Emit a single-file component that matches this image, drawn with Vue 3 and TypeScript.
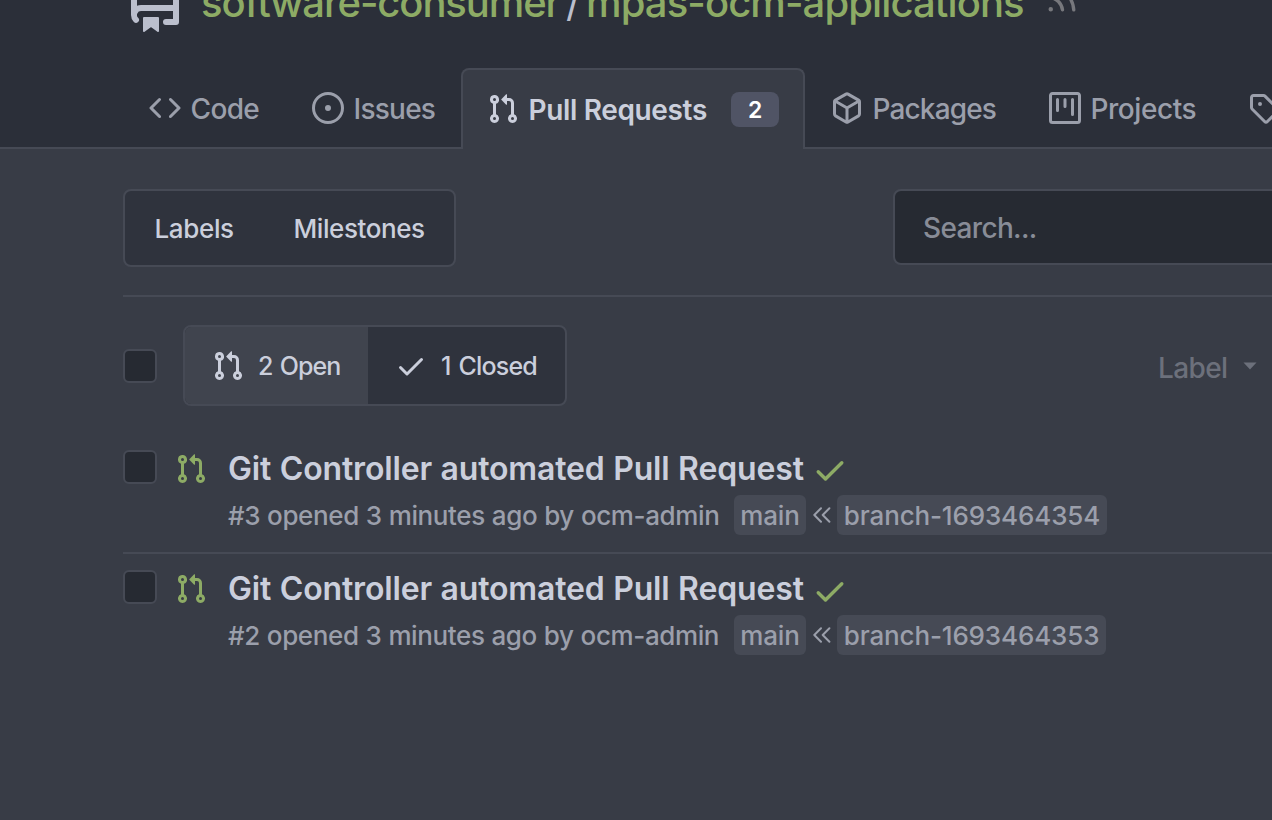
<script setup lang="ts">
interface Tab {
  key: string
  label: string
  icon: string
  badge?: number
}

interface PullRequest {
  id: number
  title: string
  meta: string
  target: string
  source: string
}

const icons: Record<string, string> = {
  repo: 'M2 2.5A2.5 2.5 0 0 1 4.5 0h8.75a.75.75 0 0 1 .75.75v12.5a.75.75 0 0 1-.75.75h-2.5a.75.75 0 0 1 0-1.5h1.75v-2h-8a1 1 0 0 0-.714 1.7.75.75 0 1 1-1.072 1.05A2.495 2.495 0 0 1 2 11.5Zm10.5-1h-8a1 1 0 0 0-1 1v6.708A2.486 2.486 0 0 1 4.5 9h8ZM5 12.25a.25.25 0 0 1 .25-.25h3.5a.25.25 0 0 1 .25.25v3.25a.25.25 0 0 1-.4.2l-1.45-1.087a.249.249 0 0 0-.3 0L5.4 15.7a.25.25 0 0 1-.4-.2Z',
  rss: 'M2.002 2.725a.75.75 0 0 1 .797-.699C8.79 2.42 13.58 7.21 13.974 13.201a.75.75 0 0 1-1.497.098 10.502 10.502 0 0 0-9.776-9.776.747.747 0 0 1-.7-.798ZM2.84 7.05h-.002a7.002 7.002 0 0 1 6.113 6.111.75.75 0 0 1-1.49.178 5.503 5.503 0 0 0-4.8-4.8.75.75 0 0 1 .179-1.489ZM2 13a1 1 0 1 1 2 0 1 1 0 0 1-2 0Z',
  code: 'm11.28 3.22 4.25 4.25a.75.75 0 0 1 0 1.06l-4.25 4.25a.749.749 0 0 1-1.275-.326.749.749 0 0 1 .215-.734L13.94 8l-3.72-3.72a.749.749 0 0 1 .326-1.275.749.749 0 0 1 .734.215Zm-6.56 0a.751.751 0 0 1 1.042.018.751.751 0 0 1 .018 1.042L2.06 8l3.72 3.72a.749.749 0 0 1-.326 1.275.749.749 0 0 1-.734-.215L.47 8.53a.75.75 0 0 1 0-1.06Z',
  issues: 'M8 9.5a1.5 1.5 0 1 0 0-3 1.5 1.5 0 0 0 0 3ZM8 0a8 8 0 1 1 0 16A8 8 0 0 1 8 0ZM1.5 8a6.5 6.5 0 1 0 13 0 6.5 6.5 0 0 0-13 0Z',
  pulls: 'M1.5 3.25a2.25 2.25 0 1 1 3 2.122v5.256a2.251 2.251 0 1 1-1.5 0V5.372A2.25 2.25 0 0 1 1.5 3.25Zm5.677-.177L9.573.677A.25.25 0 0 1 10 .854V2.5h1A2.5 2.5 0 0 1 13.5 5v5.628a2.251 2.251 0 1 1-1.5 0V5a1 1 0 0 0-1-1h-1v1.646a.25.25 0 0 1-.427.177L7.177 3.427a.25.25 0 0 1 0-.354ZM3.75 2.5a.75.75 0 1 0 0 1.5.75.75 0 0 0 0-1.5Zm0 9.5a.75.75 0 1 0 0 1.5.75.75 0 0 0 0-1.5Zm8.25.75a.75.75 0 1 0 1.5 0 .75.75 0 0 0-1.5 0Z',
  packages: 'm8.878.392 5.25 3.045c.54.314.872.89.872 1.514v6.098a1.75 1.75 0 0 1-.872 1.514l-5.25 3.045a1.75 1.75 0 0 1-1.756 0l-5.25-3.045A1.75 1.75 0 0 1 1 11.049V4.951c0-.624.332-1.201.872-1.514L7.122.392a1.75 1.75 0 0 1 1.756 0ZM7.875 1.69l-4.63 2.685L8 7.133l4.755-2.758-4.63-2.685a.248.248 0 0 0-.25 0ZM2.5 5.677v5.372c0 .09.047.171.125.216l4.625 2.683V8.432Zm6.25 8.271 4.625-2.683a.25.25 0 0 0 .125-.216V5.677L8.75 8.432Z',
  projects: 'M1.75 0h12.5C15.216 0 16 .784 16 1.75v12.5A1.75 1.75 0 0 1 14.25 16H1.75A1.75 1.75 0 0 1 0 14.25V1.75C0 .784.784 0 1.75 0ZM1.5 1.75v12.5c0 .138.112.25.25.25h12.5a.25.25 0 0 0 .25-.25V1.75a.25.25 0 0 0-.25-.25H1.75a.25.25 0 0 0-.25.25ZM11.75 3a.75.75 0 0 1 .75.75v7.5a.75.75 0 0 1-1.5 0v-7.5a.75.75 0 0 1 .75-.75Zm-8.25.75a.75.75 0 0 1 1.5 0v5.5a.75.75 0 0 1-1.5 0ZM8 3a.75.75 0 0 1 .75.75v3.5a.75.75 0 0 1-1.5 0v-3.5A.75.75 0 0 1 8 3Z',
  releases: 'M1 7.775V2.75C1 1.784 1.784 1 2.75 1h5.025c.464 0 .91.184 1.238.513l6.25 6.25a1.75 1.75 0 0 1 0 2.474l-5.026 5.026a1.75 1.75 0 0 1-2.474 0l-6.25-6.25A1.752 1.752 0 0 1 1 7.775Zm1.5 0c0 .066.026.13.073.177l6.25 6.25a.25.25 0 0 0 .354 0l5.025-5.025a.25.25 0 0 0 0-.354l-6.25-6.25a.25.25 0 0 0-.177-.073H2.75a.25.25 0 0 0-.25.25ZM6 5a1 1 0 1 1 0 2 1 1 0 0 1 0-2Z',
  check: 'M13.78 4.22a.75.75 0 0 1 0 1.06l-7.25 7.25a.75.75 0 0 1-1.06 0L2.22 9.28a.751.751 0 0 1 .018-1.042.751.751 0 0 1 1.042-.018L6 10.94l6.72-6.72a.75.75 0 0 1 1.06 0Z',
}

const tabs: Tab[] = [
  { key: 'code', label: 'Code', icon: icons.code },
  { key: 'issues', label: 'Issues', icon: icons.issues },
  { key: 'pulls', label: 'Pull Requests', icon: icons.pulls, badge: 2 },
  { key: 'packages', label: 'Packages', icon: icons.packages },
  { key: 'projects', label: 'Projects', icon: icons.projects },
  { key: 'releases', label: '', icon: icons.releases },
]
const activeTab = 'pulls'

const pulls: PullRequest[] = [
  {
    id: 3,
    title: 'Git Controller automated Pull Request',
    meta: 'opened 3 minutes ago by ocm-admin',
    target: 'main',
    source: 'branch-1693464354',
  },
  {
    id: 2,
    title: 'Git Controller automated Pull Request',
    meta: 'opened 3 minutes ago by ocm-admin',
    target: 'main',
    source: 'branch-1693464353',
  },
]
</script>

<template>
  <div class="page">
    <header class="header">
      <div class="repo">
        <svg class="repo-icon" viewBox="0 0 16 16"><path :d="icons.repo" /></svg>
        <a class="owner">software-consumer</a>
        <span class="slash">/</span>
        <a class="name">mpas-ocm-applications</a>
        <svg class="rss" viewBox="0 0 16 16"><path :d="icons.rss" /></svg>
      </div>
      <nav class="tabs">
        <a
          v-for="tab in tabs"
          :key="tab.key"
          class="tab"
          :class="['tab-' + tab.key, { active: tab.key === activeTab }]"
        >
          <svg class="icon" viewBox="0 0 16 16"><path :d="tab.icon" /></svg>
          <span v-if="tab.label" class="tab-label">{{ tab.label }}</span>
          <span v-if="tab.badge" class="badge">{{ tab.badge }}</span>
        </a>
      </nav>
    </header>

    <main class="content">
      <div class="toolbar">
        <div class="group links">
          <a class="labels">Labels</a>
          <a class="milestones">Milestones</a>
        </div>
        <div class="search">Search...</div>
      </div>

      <div class="filters">
        <span class="checkbox"></span>
        <div class="group states">
          <a class="state open">
            <svg class="icon" viewBox="0 0 16 16"><path :d="icons.pulls" /></svg>
            <span>2 Open</span>
          </a>
          <a class="state closed">
            <svg class="icon" viewBox="0 0 16 16"><path :d="icons.check" /></svg>
            <span>1 Closed</span>
          </a>
        </div>
        <div class="label-filter">
          <span class="label-text">Label</span>
          <svg class="caret" viewBox="0 0 14 8"><path d="M0.5 0.5H13.5L7 7.5Z" /></svg>
        </div>
      </div>

      <ul class="list">
        <li v-for="pr in pulls" :key="pr.id" class="row">
          <span class="checkbox"></span>
          <svg class="icon pr-icon" viewBox="0 0 16 16"><path :d="icons.pulls" /></svg>
          <div class="body">
            <div class="title-line">
              <a class="title">{{ pr.title }}</a>
              <svg class="status" viewBox="0 0 16 16"><path :d="icons.check" /></svg>
            </div>
            <div class="meta-line">
              <span class="meta">#{{ pr.id }} {{ pr.meta }}</span>
              <span class="chip target">{{ pr.target }}</span>
              <svg class="chevrons" viewBox="0 0 18 16">
                <path d="M8 1.2 1.3 8 8 14.8M16.4 1.2 9.7 8l6.7 6.8" />
              </svg>
              <span class="chip source">{{ pr.source }}</span>
            </div>
          </div>
        </li>
      </ul>
    </main>
  </div>
</template>

<style>
body {
  margin: 0;
  background: #383c46;
}
</style>

<style scoped>
.page {
  width: 1272px;
  height: 820px;
  overflow: hidden;
  box-sizing: border-box;
  background: #383c46;
  color: #cbcfdc;
  font-family: Inter, 'Liberation Sans', sans-serif;
  font-size: 26px;
  font-weight: 450;
  white-space: nowrap;
}
svg {
  display: block;
  flex: none;
  fill: currentColor;
}
.icon {
  width: 32px;
  height: 32px;
}

.header {
  height: 149px;
  box-sizing: border-box;
  overflow: hidden;
  background: #2b2f39;
  box-shadow: inset 0 -2px #464a55;
}
.repo {
  display: flex;
  align-items: center;
  height: 64px;
  margin-top: -31px;
  padding-left: 123px;
  font-size: 40px;
  font-weight: 500;
  line-height: 64px;
}
.repo-icon {
  width: 64px;
  height: 64px;
  color: #bbbfcd;
}
.owner,
.name {
  color: #8dab65;
  padding-top: 3px;
}
.owner {
  width: 365px;
  margin-left: 14px;
  letter-spacing: -1.1px;
}
.slash {
  width: 20px;
  padding-top: 3px;
  font-weight: 400;
  color: #bbbfcd;
}
.name {
  width: 439px;
  letter-spacing: -0.9px;
}
.rss {
  width: 36px;
  height: 36px;
  margin: -6px 0 0 19px;
  color: #77787d;
}

.tabs {
  display: flex;
  width: 1400px;
  height: 81px;
  margin-top: 35px;
  padding-left: 123px;
  font-size: 28px;
}
.tab {
  display: flex;
  align-items: center;
  gap: 9.5px;
  height: 81px;
  box-sizing: border-box;
  padding: 0 26px;
  color: #9b9fab;
}
.tab .icon {
  margin-top: -1px;
}
.tab-label {
  padding-top: 1px;
}
.tab-code {
  width: 163px;
  letter-spacing: -0.65px;
}
.tab-issues {
  width: 175px;
  letter-spacing: -0.75px;
}
.tab-packages {
  width: 218px;
  letter-spacing: -0.85px;
}
.tab-projects {
  width: 199px;
  letter-spacing: -0.45px;
}
.tab.active {
  width: 344px;
  padding: 0 24px;
  border: 2px solid #464a55;
  border-bottom: 0;
  border-radius: 8px 8px 0 0;
  background: #383c46;
  color: #cbcfdc;
  font-weight: 600;
  letter-spacing: -0.35px;
}
.badge {
  width: 48px;
  height: 35px;
  margin-left: auto;
  border-radius: 8px;
  background: #505465;
  color: #fff;
  font-size: 23px;
  font-weight: 600;
  line-height: 36px;
  text-align: center;
}

.content {
  padding: 40px 0 0 123px;
}
.toolbar {
  display: flex;
  align-items: flex-start;
  justify-content: space-between;
  width: 1230px;
  height: 108px;
  box-sizing: border-box;
  border-bottom: 2px solid #464a55;
}
.group {
  display: flex;
  box-sizing: border-box;
  border: 2px solid #464a55;
  border-radius: 8px;
  background: #2f333d;
  overflow: hidden;
}
.links {
  width: 333px;
  height: 78px;
  padding-left: 29.5px;
  line-height: 75px;
}
.labels {
  width: 139px;
  letter-spacing: -0.35px;
}
.milestones {
  letter-spacing: -0.42px;
}
.search {
  width: 460px;
  height: 76px;
  box-sizing: border-box;
  padding-left: 28px;
  border: 2px solid #464a55;
  border-radius: 8px;
  background: #262a32;
  color: #888c97;
  font-size: 28px;
  line-height: 75px;
  letter-spacing: -0.65px;
}

.filters {
  display: flex;
  align-items: center;
  height: 81px;
  margin-top: 28px;
}
.checkbox {
  flex: none;
  width: 34px;
  height: 34px;
  box-sizing: border-box;
  border: 2px solid #464a55;
  border-radius: 6px;
  background: #262a32;
}
.states {
  width: 384px;
  height: 81px;
  margin-left: 26px;
  font-size: 25px;
}
.state {
  display: flex;
  align-items: center;
  gap: 14px;
  padding-left: 27px;
}
.state span {
  padding-top: 1px;
}
.open {
  width: 156px;
  background: #40444e;
  letter-spacing: -0.9px;
  word-spacing: 1.5px;
}
.closed {
  letter-spacing: -0.8px;
  word-spacing: 2px;
}
.label-filter {
  display: flex;
  align-items: center;
  margin: 5px 0 0 591px;
  color: #6c707b;
  font-size: 28px;
  letter-spacing: -0.6px;
}
.label-text {
  width: 71px;
}
.caret {
  width: 14px;
  height: 8px;
  margin: -4px 0 0 14px;
}

.list {
  margin: 26px 0 0;
  padding: 0;
  list-style: none;
}
.row {
  display: flex;
  align-items: flex-start;
  width: 1230px;
  height: 120px;
  box-sizing: border-box;
  padding-top: 18px;
}
.row + .row {
  box-shadow: inset 0 2px #464a55;
}
.pr-icon {
  margin: 3px 0 0 18px;
  color: #8dab65;
}
.body {
  margin-left: 21px;
}
.title-line {
  display: flex;
  align-items: flex-start;
  height: 45px;
}
.title {
  width: 575px;
  font-size: 32px;
  font-weight: 600;
  line-height: 38px;
  letter-spacing: -0.15px;
  word-spacing: 0.6px;
}
.status {
  width: 36px;
  height: 36px;
  margin: 2px 0 0 8.5px;
  color: #8dab65;
}
.row + .row .status {
  margin-top: 3px;
}
.meta-line {
  display: flex;
  align-items: center;
  height: 40px;
  color: #9b9fab;
}
.meta {
  width: 492px;
  padding-top: 1px;
  line-height: 42px;
  letter-spacing: -0.38px;
  word-spacing: 0.4px;
}
.chip {
  height: 40px;
  box-sizing: border-box;
  border-radius: 6px;
  background: #464a55;
  line-height: 41px;
  letter-spacing: -0.15px;
  text-align: center;
}
.target {
  width: 72px;
  margin-left: 14px;
}
.source {
  width: 270px;
}
.row + .row .source {
  width: 269px;
}
.chevrons {
  width: 18px;
  height: 16px;
  margin: 0 6px 0 7px;
  fill: none;
  stroke: currentColor;
  stroke-width: 2;
  stroke-linecap: round;
  stroke-linejoin: round;
}
</style>
